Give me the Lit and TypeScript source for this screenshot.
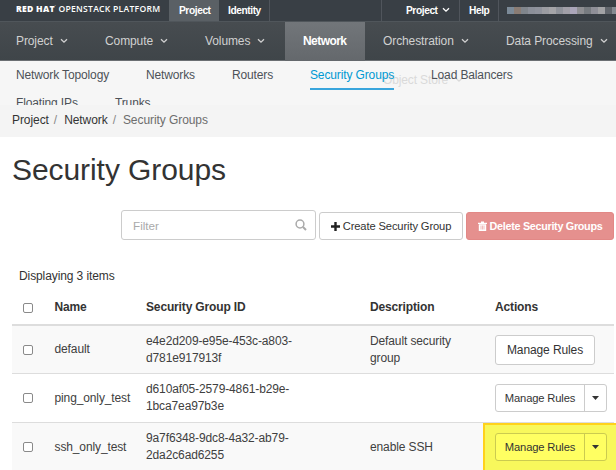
import { LitElement, html, css, nothing } from "lit";
import { customElement, property } from "lit/decorators.js";
import { classMap } from "lit/directives/class-map.js";

const chevron = html`<svg class="chev" width="8" height="6" viewBox="0 0 8 6"><path d="M1 1.2 4 4.2 7 1.2" fill="none" stroke="currentColor" stroke-width="1.3"/></svg>`;

const maskColors = ["#7b8a98", "#8a7c74", "#80858c", "#8b8f99", "#8f929c", "#9b9ca2", "#a4a4a8", "#8f929a", "#a19fa8", "#aaa5b9", "#8e8e92", "#777b80", "#8f8f98", "#a2a2a5", "#62666d", "#858a91"];

@customElement("top-bar")
class TopBar extends LitElement {
  static styles = css`
    :host { display: grid; grid-template-columns: 169px 50px 51px 112px 78px 39px 1fr; height: 21px; background: #393f45; border-bottom: 1px solid #50565b; color: #fff; font-size: 10.2px; font-weight: bold; line-height: 21px; letter-spacing: -0.42px; }
    .cell { border-right: 1px solid #50555c; white-space: nowrap; padding-left: 9px; }
    .brand { padding-left: 16px; border: 0; font: 800 8.6px/18px "Open Sans", sans-serif; letter-spacing: 0.26px; }
    .brand .light { font-weight: 600; }
    .brand .tm { font-size: 3px; vertical-align: top; line-height: 12px; }
    .active { background: #5a6065; padding-left: 10px; border: 0; letter-spacing: -0.42px; }
    .picker { padding-left: 24px; }
    .chev { margin-left: 4px; vertical-align: 1px; }
    .mask { display: flex; padding: 7px 0 0 8px; overflow: hidden; }
    .pixel { flex: 0 0 7px; height: 7px; }
  `;
  render() {
    return html`
      <div class="cell brand">RED HAT<span class="tm">·</span> <span class="light">OPENSTACK PLATFORM</span></div>
      <div class="cell active">Project</div>
      <div class="cell">Identity</div>
      <div class="cell"></div>
      <div class="cell picker">Project${chevron}</div>
      <div class="cell">Help</div>
      <div class="mask">${maskColors.map((c) => html`<i class="pixel" style="background:${c}"></i>`)}</div>`;
  }
}

@customElement("main-nav")
class MainNav extends LitElement {
  static styles = css`
    :host { display: grid; grid-template-columns: 89px 100px 96px 80px 123px 1fr; height: 38px; border-bottom: 1px solid #6b6f73; background: linear-gradient(#474c50, #3f4549); color: #d1d1d1; font-size: 12px; line-height: 39px; letter-spacing: -0.1px; }
    .item { padding-left: 16px; white-space: nowrap; }
    .item.wide { padding-left: 18px; }
    .item.active { background: linear-gradient(#72767a, #64686c); color: #fff; font-weight: bold; letter-spacing: -0.55px; padding-left: 18px; }
    .chev { margin-left: 7px; vertical-align: 1px; }
  `;
  render() {
    return html`
      <div class="item">Project${chevron}</div>
      <div class="item">Compute${chevron}</div>
      <div class="item">Volumes${chevron}</div>
      <div class="item active">Network</div>
      <div class="item wide">Orchestration${chevron}</div>
      <div class="item wide">Data Processing${chevron}</div>`;
  }
}

@customElement("sub-nav")
class SubNav extends LitElement {
  static styles = css`
    :host { display: block; position: relative; height: 44px; overflow: hidden; background: #f6f6f6; color: #4d5258; font-size: 12px; line-height: 28px; letter-spacing: -0.13px; }
    .row { position: relative; display: grid; grid-template-columns: 130px 86px 78px 121px 1fr; padding-left: 16px; height: 28px; white-space: nowrap; }
    .second { grid-template-columns: 99px 1fr; }
    .active { color: #0099d3; justify-self: start; height: 27px; border-bottom: 2px solid #39a5dc; }
    .ghost { position: absolute; left: 383px; top: 5px; color: #dadada; }
    .chev { margin-left: 7px; vertical-align: 1px; }
  `;
  render() {
    return html`
      <div class="ghost">Object Store${chevron}</div>
      <div class="row"><span>Network Topology</span><span>Networks</span><span>Routers</span><span class="active">Security Groups</span><span>Load Balancers</span></div>
      <div class="row second"><span>Floating IPs</span><span>Trunks</span></div>`;
  }
}

@customElement("manage-button")
class ManageButton extends LitElement {
  @property({ type: Boolean }) split = false;
  @property({ type: Boolean }) marked = false;
  static styles = css`
    :host { display: block; }
    .group { display: flex; box-sizing: border-box; width: 112px; height: 28px; border: 1px solid #ccc; border-radius: 3px; background: #fff; color: #333; font-size: 11.2px; line-height: 27px; letter-spacing: -0.15px; }
    .single { width: 100px; height: 30px; font-size: 12px; line-height: 28px; letter-spacing: -0.1px; }
    .label { flex: 1; text-align: center; white-space: nowrap; }
    .toggle { width: 21px; border-left: 1px solid #ccc; display: grid; place-items: center; }
    .marked { background: #ffff62; border-color: #cbcb50; }
    .marked .toggle { border-color: #cbcb50; }
  `;
  render() {
    return html`<div class=${classMap({ group: true, single: !this.split, marked: this.marked })}>
      <span class="label">Manage Rules</span>
      ${this.split ? html`<span class="toggle"><svg width="7" height="4" viewBox="0 0 7 4"><path d="M0 0h7L3.5 4z" fill="#333"/></svg></span>` : nothing}
    </div>`;
  }
}

const groups = [
  { name: "default", id: ["e4e2d209-e95e-453c-a803-", "d781e917913f"], text: ["Default security", "group"], split: false, marked: false },
  { name: "ping_only_test", id: ["d610af05-2579-4861-b29e-", "1bca7ea97b3e"], text: [], split: true, marked: false },
  { name: "ssh_only_test", id: ["9a7f6348-9dc8-4a32-ab79-", "2da2c6ad6255"], text: ["enable SSH"], split: true, marked: true },
];

@customElement("group-table")
class GroupTable extends LitElement {
  static styles = css`
    :host { display: block; margin-left: 12px; width: 602px; font-size: 12px; line-height: 17px; letter-spacing: -0.12px; color: #404040; }
    .row { display: grid; grid-template-columns: 42.5px 91.5px 224px 125px 1fr; align-items: center; height: 48px; border-top: 1px solid #ddd; white-space: nowrap; }
    .head { height: 33px; border: 0; font-weight: bold; color: #333; letter-spacing: -0.15px; }
    .first { height: 47px; border-top: 2px solid #ddd; }
    .odd { background: #f9f9f9; }
    .box { width: 8px; height: 8px; margin-left: 11px; border: 1px solid #8a8a8a; border-radius: 2px; background: #fff; }
    .line { display: block; }
    .actions { position: relative; }
    .glow { position: absolute; left: -12px; top: -10px; width: 140px; height: 60px; box-sizing: border-box; border: 2px solid #ffd21c; background: #f8f85c; }
    .front { position: relative; }
  `;
  render() {
    return html`
      <div class="row head"><i class="box"></i><span>Name</span><span>Security Group ID</span><span>Description</span><span>Actions</span></div>
      ${groups.map((g, i) => html`
        <div class=${classMap({ row: true, first: i === 0, odd: i % 2 === 0 })}>
          <i class="box"></i><span>${g.name}</span>
          <span>${g.id.map((t) => html`<span class="line">${t}</span>`)}</span>
          <span>${g.text.map((t) => html`<span class="line">${t}</span>`)}</span>
          <div class="actions">
            ${g.marked ? html`<div class="glow"></div>` : nothing}
            <manage-button class="front" ?split=${g.split} ?marked=${g.marked}></manage-button>
          </div>
        </div>`)}`;
  }
}

@customElement("app-root")
class AppRoot extends LitElement {
  static styles = css`
    :host { display: block; height: 470px; overflow: hidden; background: #fff; font-family: "Liberation Sans", Arial, sans-serif; color: #333; }
    .crumbs { display: flex; height: 32px; background: #f4f4f4; padding-left: 12px; font-size: 12px; line-height: 31px; white-space: pre; letter-spacing: -0.07px; }
    .sep { color: #888; margin: 0 7px 0 5px; }
    .here { color: #6d6d6d; }
    .title { margin: 0; height: 73px; font-size: 30px; font-weight: normal; line-height: 65px; padding-left: 12px; letter-spacing: -0.07px; }
    .tools { display: flex; align-items: flex-end; height: 30px; padding-left: 121px; white-space: nowrap; }
    .filter { box-sizing: border-box; display: flex; justify-content: space-between; align-items: center; width: 195px; height: 30px; padding: 0 8px 0 11px; border: 1px solid #ccc; border-radius: 3px; font-size: 11.7px; color: #aaa; }
    .btn { box-sizing: border-box; display: flex; align-items: center; justify-content: center; height: 28px; border: 1px solid #ccc; border-radius: 3px; font-size: 11.2px; gap: 3px; line-height: 26px; }
    .create { width: 144px; margin-left: 3px; }
    .create span { letter-spacing: -0.13px; }
    .delete { width: 148px; margin-left: 3px; color: #fff; background: #e5908e; border-color: #e28886; font-weight: bold; font-size: 10.8px; letter-spacing: -0.3px; }
    .count { height: 51px; padding-left: 19px; font-size: 12px; line-height: 72px; letter-spacing: -0.1px; }
  `;
  render() {
    return html`
      <top-bar></top-bar><main-nav></main-nav><sub-nav></sub-nav>
      <div class="crumbs"><span>Project</span><span class="sep">/</span><span>Network</span><span class="sep">/</span><span class="here">Security Groups</span></div>
      <h1 class="title">Security Groups</h1>
      <div class="tools">
        <div class="filter"><span>Filter</span><svg width="12" height="12" viewBox="0 0 12 12" fill="none" stroke="#aaa"><circle cx="5" cy="5" r="3.9" stroke-width="1.5"/><path d="m8 8 3 3" stroke-width="2"/></svg></div>
        <div class="btn create"><svg width="9" height="9" viewBox="0 0 9 9"><path d="M4.5 0v9M0 4.5h9" stroke="#222" stroke-width="2.4"/></svg><span>Create Security Group</span></div>
        <div class="btn delete"><svg width="9" height="10" viewBox="0 0 9 10"><path d="M3 .5h3v1.2h3v1.2H0V1.7h3zM.8 3.3h7.4V10H.8z" fill="#fff"/><path d="M3 4.5v4M4.5 4.5v4M6 4.5v4" stroke="#e5908e" stroke-width=".6"/></svg><span>Delete Security Groups</span></div>
      </div>
      <div class="count">Displaying 3 items</div>
      <group-table></group-table>`;
  }
}
